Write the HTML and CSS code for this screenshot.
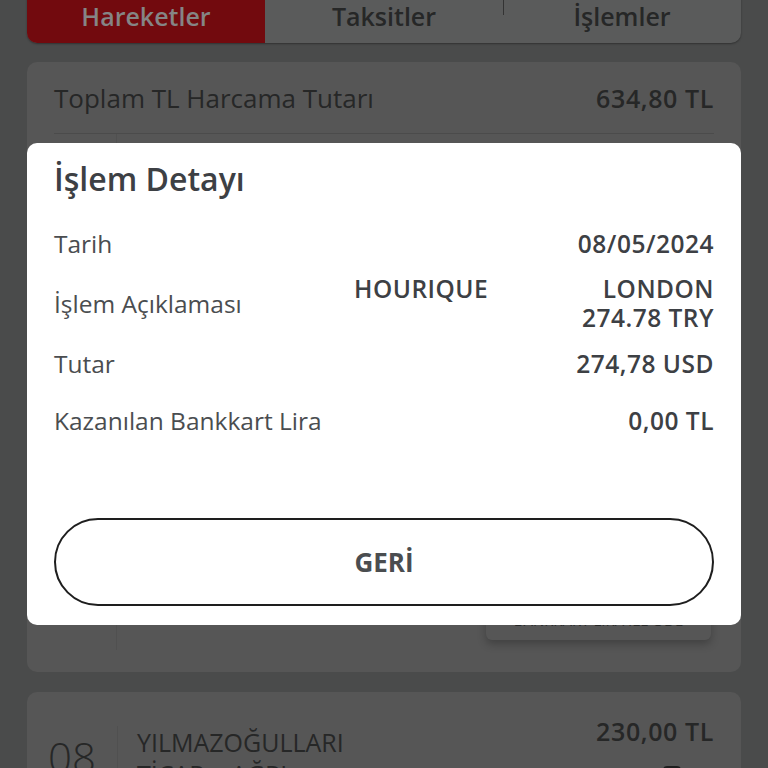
FILE: index.html
```html
<!DOCTYPE html>
<html lang="tr">
<head>
<meta charset="utf-8">
<link rel="stylesheet" href="styles.css">
</head>
<body>
<div class="page">
  <div class="tabs">
    <div class="tab tab-active">Hareketler</div>
    <div class="tab">Taksitler</div>
    <div class="tab tab-last">İşlemler</div>
  </div>

  <div class="card card-main">
    <div class="sum-row">
      <span class="label">Toplam TL Harcama Tutarı</span>
      <span class="value">634,80 TL</span>
    </div>
    <div class="tx-body">
      <div class="tx-date"></div>
      <div class="tx-content">
        <div class="pay-btn">BANKKART LİRA İLE ÖDE</div>
      </div>
    </div>
  </div>

  <div class="card card-second">
    <div class="tx-row">
      <div class="day">08</div>
      <div class="merchant">
        <div class="m-name">YILMAZOĞULLARI</div>
        <div class="m-name">TİCAR... AĞRI</div>
      </div>
      <div class="m-right">
        <div class="value">230,00 TL</div>
        <div class="m-icon"></div>
      </div>
    </div>
  </div>
</div>

<div class="modal">
  <h1 class="modal-title">İşlem Detayı</h1>
  <div class="detail">
    <div class="d-row d-row-date">
      <span class="d-label">Tarih</span>
      <span class="d-value">08/05/2024</span>
    </div>
    <div class="d-row d-row-desc">
      <span class="d-label">İşlem Açıklaması</span>
      <span class="d-merchant">HOURIQUE</span>
      <span class="d-value d-multi"><span class="line">LONDON</span><span class="line">274.78 TRY</span></span>
    </div>
    <div class="d-row d-row-amount">
      <span class="d-label">Tutar</span>
      <span class="d-value">274,78 USD</span>
    </div>
    <div class="d-row d-row-earn">
      <span class="d-label">Kazanılan Bankkart Lira</span>
      <span class="d-value">0,00 TL</span>
    </div>
  </div>
  <div class="back-btn">GERİ</div>
</div>
</body>
</html>
```

FILE: styles.css
```css
* { box-sizing: border-box; margin: 0; padding: 0; }

html, body {
  width: 768px;
  height: 768px;
  overflow: hidden;
}

body {
  background: #4a4b4b;
  font-family: "Open Sans", Roboto, sans-serif;
  position: relative;
}

.page {
  padding: 0 27px;
  display: flex;
  flex-direction: column;
}

.tabs {
  margin-top: -14px;
  height: 57px;
  display: flex;
  background: #5a5b5b;
  border-radius: 10px;
  overflow: hidden;
  box-shadow: 0 1px 2px rgba(0,0,0,0.35);
}

.tab {
  flex: 1;
  display: flex;
  align-items: center;
  justify-content: center;
  padding-top: 3px;
  font-size: 25px;
  font-weight: 600;
  color: #262727;
  position: relative;
}

.tab-active {
  flex: 0 0 238px;
  background: #720a0e;
  color: #858585;
}

.tab-last::before {
  content: "";
  position: absolute;
  left: 0;
  top: 0;
  height: 29px;
  border-left: 1px solid #333;
}

.card {
  background: #565656;
  border-radius: 10px;
}

.card-main {
  margin-top: 19px;
  padding: 0 27px 22px;
  height: 610px;
  display: flex;
  flex-direction: column;
}

.sum-row {
  height: 72px;
  display: flex;
  align-items: center;
  justify-content: space-between;
  border-bottom: 1px solid #4b4b4b;
}

.label {
  font-size: 26px;
  color: #262727;
}

.value {
  font-size: 25px;
  font-weight: 600;
  letter-spacing: 0.6px;
  color: #262727;
}

.tx-body {
  flex: 1;
  display: flex;
}

.tx-date {
  width: 63px;
  border-right: 1px solid #505050;
}

.tx-content {
  flex: 1;
  display: flex;
  justify-content: flex-end;
  align-items: flex-end;
}

.pay-btn {
  width: 225px;
  height: 34px;
  margin-bottom: 10px;
  margin-right: 3px;
  border-radius: 6px;
  background: #565656;
  box-shadow: 0 4px 8px rgba(0,0,0,0.25);
  font-size: 15px;
  color: #262727;
  display: flex;
  align-items: flex-start;
  justify-content: center;
  padding-top: 4px;
}

.card-second {
  margin-top: 20px;
  height: 120px;
  padding: 0 27px 0 21px;
}

.tx-row {
  display: flex;
  padding-top: 22px;
}

.day {
  width: 69px;
  font-size: 42px;
  font-weight: 300;
  color: #262727;
  padding-top: 14px;
}

.merchant {
  flex: 1;
  border-left: 1px solid #505050;
  margin-top: 12px;
  padding-left: 19px;
}

.m-name {
  font-size: 25px;
  color: #262727;
  line-height: 32px;
}

.m-right {
  display: flex;
  flex-direction: column;
  align-items: flex-end;
}

.m-icon {
  width: 18px;
  height: 18px;
  margin-top: 18px;
  margin-right: 33px;
  border: 2px solid #1e1e1e;
  border-radius: 4px;
}

.modal {
  position: absolute;
  left: 27px;
  top: 143px;
  width: 714px;
  height: 482px;
  background: #ffffff;
  border-radius: 10px;
  padding: 16px 27px 0;
  display: flex;
  flex-direction: column;
  color: #474a4d;
}

.modal-title {
  font-size: 32px;
  font-weight: 600;
  color: #3d4044;
  line-height: 40px;
}

.detail {
  margin-top: 30px;
  display: flex;
  flex-direction: column;
}

.d-row {
  display: flex;
  justify-content: space-between;
  align-items: center;
  font-size: 24.5px;
  line-height: 29px;
}

.d-row-desc {
  position: relative;
  align-items: flex-start;
  margin-top: 16px;
}

.d-row-desc .d-label {
  margin-top: 15px;
}

.d-multi {
  display: flex;
  flex-direction: column;
  align-items: flex-end;
}

.d-multi .line {
  line-height: 29px;
}

.d-row-amount {
  margin-top: 17px;
}

.d-row-earn {
  margin-top: 28px;
}

.d-label {
  color: #4a4d50;
}

.d-value {
  font-weight: 600;
  letter-spacing: 0.5px;
  color: #3d4044;
  text-align: right;
}

.d-merchant {
  position: absolute;
  left: 300px;
  top: 0;
  font-weight: 600;
  letter-spacing: 0.5px;
  color: #3d4044;
}

.back-btn {
  margin-top: 83px;
  height: 88px;
  border: 2px solid #1e1e1e;
  border-radius: 45px;
  display: flex;
  align-items: center;
  justify-content: center;
  font-size: 26px;
  font-weight: 700;
  color: #4a4d50;
}
```
